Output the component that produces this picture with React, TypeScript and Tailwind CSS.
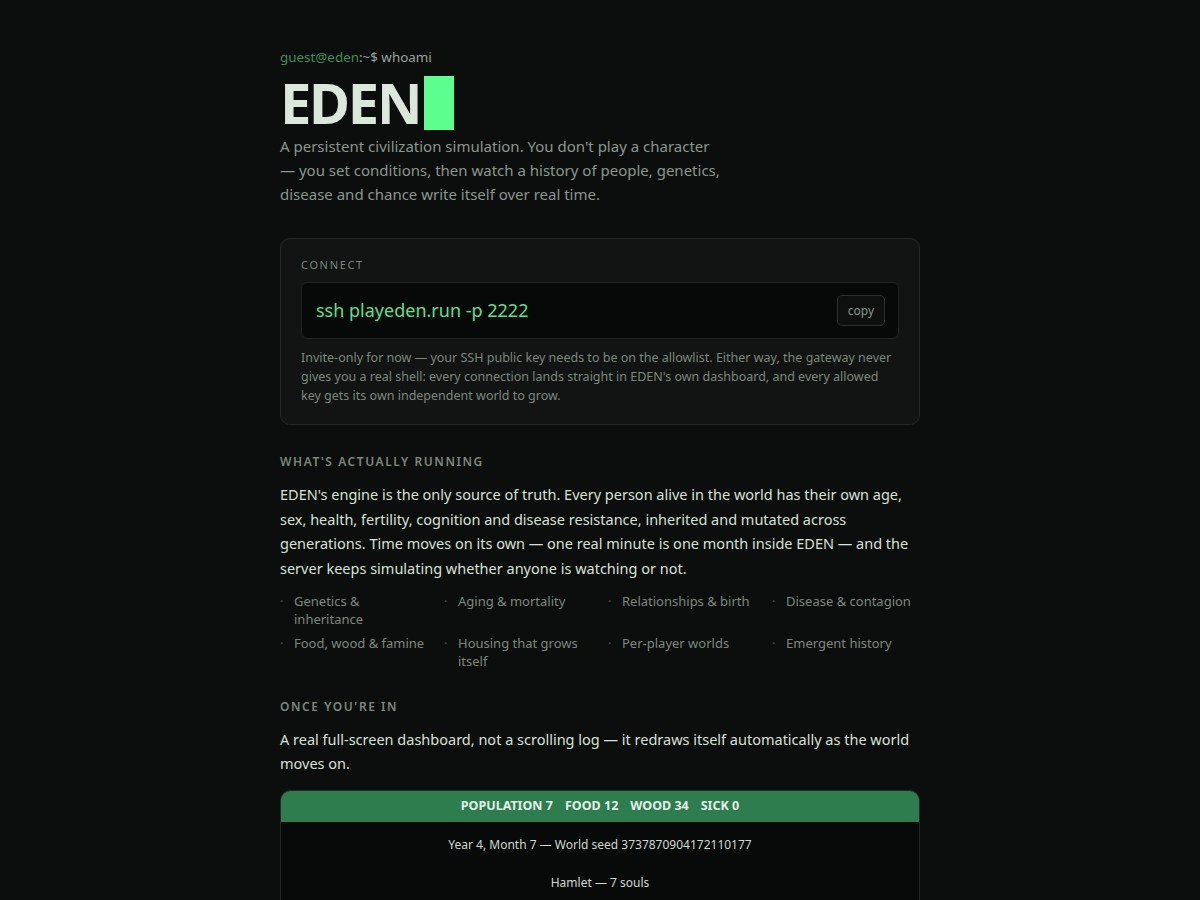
import React from "react";

const features = [
  "Genetics & inheritance",
  "Aging & mortality",
  "Relationships & birth",
  "Disease & contagion",
  "Food, wood & famine",
  "Housing that grows itself",
  "Per-player worlds",
  "Emergent history",
];

export default function App() {
  return (
    <div
      className="min-h-[900px] bg-[#0c0e0d] text-[#dfe6df]"
      style={{ fontFamily: '"Noto Sans", sans-serif' }}
    >
      <div className="mx-auto w-[640px] pt-[48px] pb-10">
        <div className="text-[13.4px] leading-[18px] text-[#9aa49c]">
          <span className="text-[#3f8f5a]">guest@eden</span>
          <span>:~$ whoami</span>
        </div>
        <div className="mt-[10px] flex h-[54px] items-center">
          <h1 className="mb-[2px] text-[56px] font-bold leading-none tracking-[-0.04em] text-[#dce6dc]">EDEN</h1>
          <span className="ml-[4px] inline-block h-[54px] w-[30px] bg-[#5cff8f]" />
        </div>
        <p className="mt-[4px] w-[440px] text-[15px] leading-[24px] text-[#8b968d]">
          A persistent civilization simulation. You don't play a character — you set conditions, then watch a history of people, genetics, disease and chance write itself over real time.
        </p>

        <div className="mt-[32px] rounded-[10px] border border-[#232a25] bg-[#111412] px-[20px] pt-[19px] pb-[19px]">
          <div className="text-[11px] leading-[14px] tracking-[0.15em] text-[#7d877f]">CONNECT</div>
          <div className="mt-[10px] flex h-[57px] items-center justify-between rounded-[6px] border border-[#1f2621] bg-[#070908] pl-[14px] pr-[13px]">
            <span className="text-[18px] text-[#5fe08c]">ssh playeden.run -p 2222</span>
            <button className="h-[31px] rounded-[5px] border border-[#2a322c] bg-[#0d100e] px-[10px] text-[12px] text-[#8b968d]">
              copy
            </button>
          </div>
          <p className="mt-[9px] text-[12.5px] leading-[19px] text-[#7d877f]">
            Invite-only for now — your SSH public key needs to be on the allowlist. Either way, the gateway never gives you a real shell: every connection lands straight in EDEN's own dashboard, and every allowed key gets its own independent world to grow.
          </p>
        </div>

        <h2 className="mt-[29px] text-[12px] font-semibold leading-[16px] tracking-[0.13em] text-[#7d877f]">
          WHAT'S ACTUALLY RUNNING
        </h2>
        <p className="mt-[12px] text-[14.5px] leading-[24.67px] text-[#d8e0d8]">
          EDEN's engine is the only source of truth. Every person alive in the world has their own age, sex, health, fertility, cognition and disease resistance, inherited and mutated across generations. Time moves on its own — one real minute is one month inside EDEN — and the server keeps simulating whether anyone is watching or not.
        </p>
        <div className="mt-[11px] grid grid-cols-4 gap-x-[16px] gap-y-[6px]">
          {features.map((f) => (
            <div key={f} className="flex text-[13px] leading-[18px] text-[#7d877f]">
              <span className="w-[14px] shrink-0 text-[#4a524c]">·</span>
              <span>{f}</span>
            </div>
          ))}
        </div>

        <h2 className="mt-[29px] text-[12px] font-semibold leading-[16px] tracking-[0.13em] text-[#7d877f]">
          ONCE YOU'RE IN
        </h2>
        <p className="mt-[12px] text-[14.5px] leading-[24.67px] text-[#d8e0d8]">
          A real full-screen dashboard, not a scrolling log — it redraws itself automatically as the world moves on.
        </p>

        <div className="mt-[14px] overflow-hidden rounded-[10px] border border-[#232a25] bg-[#080a09]">
          <div className="flex h-[31px] items-center justify-center gap-[12px] bg-[#2e7d4f] text-[12.5px] font-bold text-[#e4efe6]">
            <span>POPULATION 7</span>
            <span>FOOD 12</span>
            <span>WOOD 34</span>
            <span>SICK 0</span>
          </div>
          <div className="flex flex-col items-center pt-[14px] pb-[14px] text-[12px] leading-[18px] text-[#cfd8d0]">
            <div>Year 4, Month 7 — World seed 3737870904172110177</div>
            <div className="mt-[20px]">Hamlet — 7 souls</div>
            <div className="mt-[20px]">&nbsp;</div>
          </div>
        </div>
      </div>
    </div>
  );
}
